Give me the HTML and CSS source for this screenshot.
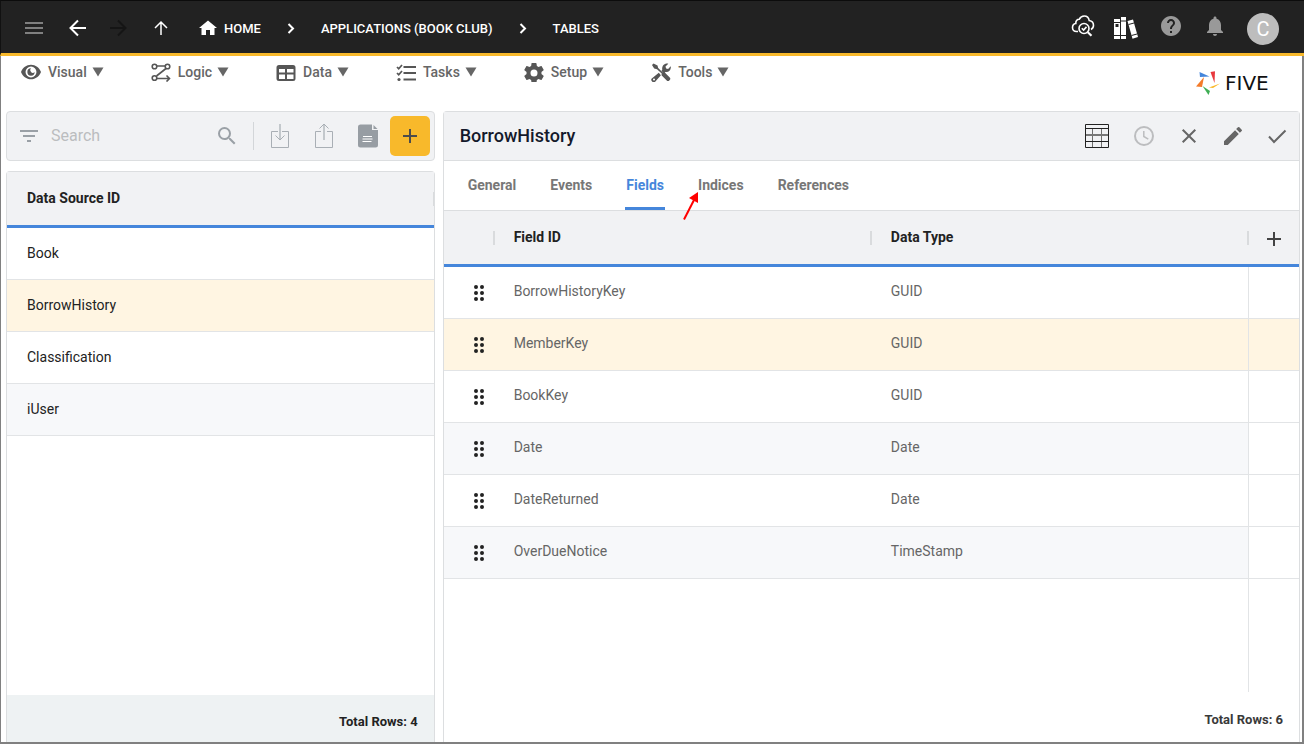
FILE: index.html
```html
<!DOCTYPE html>
<html lang="en">
<head>
<meta charset="utf-8">
<title>Five - Tables</title>
<link rel="stylesheet" href="styles.css">
</head>
<body>
<div class="app">
  <header class="topbar">
    <nav class="crumbs" aria-label="Navigation">
      <button class="nav-btn dim" aria-label="Menu"><svg width="24" height="24" viewBox="0 0 24 24"><path d="M3 5h18v2H3zM3 10h18v2H3zM3 15h18v2H3z"/></svg></button>
      <button class="nav-btn back" aria-label="Back"><svg width="24" height="24" viewBox="0 0 24 24"><path class="line" d="M20 11H5M12 3.500L4.500 11l7.500 7.500"/></svg></button>
      <button class="nav-btn off" aria-label="Forward" disabled><svg width="24" height="24" viewBox="0 0 24 24"><path class="line" d="M4 11h15M12 3.500l7.500 7.500-7.500 7.500"/></svg></button>
      <button class="nav-btn up" aria-label="Up"><svg width="24" height="24" viewBox="0 0 24 24"><path class="line thin" d="M12 18V5M6 11L12 5l6 6"/></svg></button>
      <a class="crumb" href="#"><svg width="24" height="24" viewBox="0 0 24 24"><path d="M10 18v-5h4v5h4.500v-7H21l-9-7.500L3 11h2.500v7z"/></svg>HOME</a>
      <svg class="chev" width="24" height="24" viewBox="0 0 24 24"><path class="line" d="M9.500 7l4.500 4.500L9.500 16"/></svg>
      <a class="crumb" href="#">APPLICATIONS (BOOK CLUB)</a>
      <svg class="chev" width="24" height="24" viewBox="0 0 24 24"><path class="line" d="M9.500 7l4.500 4.500L9.500 16"/></svg>
      <a class="crumb" href="#">TABLES</a>
    </nav>
    <div class="tools">
      <button class="tool" aria-label="Inspect"><svg width="24" height="24" viewBox="0 0 24 24" fill="none" stroke="#fff" stroke-width="1.600"><path d="M7 16.500H5.500C3 16.500 1.500 15 1.500 12.500c0-2.200 1.500-3.700 3.300-4C4.600 6 6 4.300 8.200 4.300 9.200 2.400 11 1 13.200 1c2.700 0 4.600 1.800 5 4.500 2.600.5 4.300 2.400 4.300 4.800 0 2-1 3.400-2.500 4.200"/><circle cx="13" cy="13.500" r="5"/><path d="M10.800 13.300l1.800 1.800 2.900-3.200"/><path stroke-width="2.200" d="M16.800 17.300l3.700 3.500"/></svg></button>
      <button class="tool" aria-label="Library"><svg width="26" height="26" viewBox="0 0 26 26"><path fill="#fff" d="M1 5h6v20H1zM8 3h5v22H8zM14.500 7l5.500-1.500L25 23l-5.500 1.700z"/><path fill="none" stroke="#222" d="M1 8.500h6M1 21.500h6M8 7h5M8 21.500h5M15.500 10.500l5.500-1.500M18.500 21.500l5.500-1.500"/><path fill="#222" d="M2.500 10h3v3h-3z"/></svg></button>
      <button class="tool grey" aria-label="Help"><svg width="24" height="24" viewBox="0 0 24 24"><path d="M12 1C6.480 1 2 5.480 2 11s4.480 10 10 10 10-4.480 10-10S17.520 1 12 1zm1 17h-2v-2h2v2zm2.070-7.750l-.9.920C13.450 11.900 13 12.500 13 14h-2v-.5c0-1.100.45-2.100 1.170-2.830l1.240-1.260c.37-.36.59-.86.59-1.410 0-1.100-.9-2-2-2s-2 .9-2 2H8c0-2.210 1.790-4 4-4s4 1.790 4 4c0 .88-.36 1.680-.93 2.250z"/></svg></button>
      <button class="tool grey" aria-label="Notifications"><svg width="24" height="24" viewBox="0 0 24 24"><path d="M12 21c1.100 0 2-.9 2-2h-4c0 1.100.89 2 2 2zm6-6v-5c0-3.070-1.640-5.640-4.500-6.320V3c0-.83-.67-1.500-1.500-1.500s-1.500.67-1.500 1.500v.68C7.630 4.360 6 6.920 6 10v5l-2 2v1h16v-1l-2-2z"/></svg></button>
      <button class="avatar" aria-label="Account">C</button>
    </div>
  </header>

  <div class="menubar">
    <nav class="menus" aria-label="Main menu">
      <button class="menu"><svg width="20" height="20" viewBox="1 1 22 22"><path d="M12 4C7 4 2.730 7.300 1 12c1.730 4.700 6 8 11 8s9.270-3.300 11-8c-1.730-4.700-6-8-11-8zm0 14a6 6 0 1 1 0-12 6 6 0 0 1 0 12zm0-10a4 4 0 1 0 4 4 2.500 2.500 0 0 1-4-4z"/></svg>Visual<svg class="tri" width="12" height="10" viewBox="0 0 12 10"><path d="M.5.500h11L6 9.500z"/></svg></button>
      <button class="menu"><svg width="20" height="20" viewBox="0 0 20 20" fill="none" stroke="#565656" stroke-width="1.600"><circle cx="3.500" cy="4.500" r="2.300"/><circle cx="16.500" cy="4.500" r="2.300"/><circle cx="3.500" cy="16" r="2.300"/><path d="M6 4h8M15 6.500L5.500 14M6 16.500h12M15.500 13.500l3 3-3 3"/></svg>Logic<svg class="tri" width="12" height="10" viewBox="0 0 12 10"><path d="M.5.500h11L6 9.500z"/></svg></button>
      <button class="menu"><svg width="20" height="20" viewBox="0 0 20 20"><path fill-rule="evenodd" d="M3 3h14a2.500 2.500 0 0 1 2.500 2.500v11A2.500 2.500 0 0 1 17 19H3a2.500 2.500 0 0 1-2.500-2.500v-11A2.500 2.500 0 0 1 3 3zm0 4v3.500h6V7zm8 0v3.500h6.500V7zm-8 5.500V17h6v-4.500zm8 0V17h6.500v-4.500z"/></svg>Data<svg class="tri" width="12" height="10" viewBox="0 0 12 10"><path d="M.5.500h11L6 9.500z"/></svg></button>
      <button class="menu"><svg width="20" height="20" viewBox="0 0 20 20"><path d="M7.500 4H20v2H7.500zM7.500 10H20v2H7.500zM7.500 16.500H20v2H7.500z"/><circle cx="3" cy="17.500" r="1.600"/><path fill="none" stroke="#565656" stroke-width="1.700" d="M1 5l1.700 1.700L6 3M1 11l1.700 1.700L6 9"/></svg>Tasks<svg class="tri" width="12" height="10" viewBox="0 0 12 10"><path d="M.5.500h11L6 9.500z"/></svg></button>
      <button class="menu"><svg width="20" height="20" viewBox="2 1 20 20"><path d="M12 15.500A3.500 3.500 0 0 1 8.500 12 3.500 3.500 0 0 1 12 8.500a3.500 3.500 0 0 1 3.500 3.500 3.500 3.500 0 0 1-3.500 3.500m7.430-2.530c.04-.32.07-.64.07-.97 0-.33-.03-.66-.07-1l2.110-1.630c.19-.15.24-.42.12-.64l-2-3.460c-.12-.22-.39-.31-.61-.22l-2.490 1c-.52-.39-1.060-.73-1.690-.98l-.37-2.650A.506.506 0 0 0 14 2h-4c-.25 0-.46.18-.5.420l-.37 2.650c-.63.25-1.170.59-1.690.98l-2.490-1c-.22-.09-.49 0-.61.220l-2 3.460c-.13.22-.07.49.12.640L4.570 11c-.04.34-.07.67-.07 1 0 .33.03.65.070.970l-2.110 1.660c-.19.15-.25.42-.12.640l2 3.460c.12.22.39.3.61.220l2.490-1.010c.52.4 1.060.74 1.690.990l.37 2.650c.04.24.25.42.5.420h4c.25 0 .46-.18.5-.42l.37-2.650c.63-.26 1.170-.59 1.690-.99l2.490 1.010c.22.08.49 0 .61-.22l2-3.460c.12-.22.07-.49-.12-.64z"/></svg>Setup<svg class="tri" width="12" height="10" viewBox="0 0 12 10"><path d="M.5.500h11L6 9.500z"/></svg></button>
      <button class="menu"><svg width="20" height="20" viewBox="0 0 20 20"><path d="M1 3L2.500 1.500l4 2 .7 2.500 4.300 4.300 1.800-.3 5.200 5.200a2 2 0 0 1 0 3 2 2 0 0 1-3 0l-5-5 .2-1.800L6 7.300 3.200 6.500z"/><path d="M14.500 1.700c1-.3 2-.3 2.800 0L14.500 4.500l.6 2 2 .5 2.600-2.700c.8 3.500-2 6.400-5.300 5.700l-1.300 1.300-2.800-2.300 1-1.200c-.6-2.700.6-5.300 3.200-6.100zM7.800 10.800L1.400 16a2.300 2.300 0 1 0 3.200 3.200l5.300-6z"/><circle cx="3" cy="17.500" r="1" fill="#fff"/></svg>Tools<svg class="tri" width="12" height="10" viewBox="0 0 12 10"><path d="M.5.500h11L6 9.500z"/></svg></button>
    </nav>
    <div class="brand"><svg width="24" height="24" viewBox="0 0 24 24"><path fill="#4586db" d="M3.500 1l10 4.500L4 6z"/><path fill="#e8383d" d="M14.500 1L19 .3 18.500 12z"/><path fill="#fbb929" d="M24 12.500L17 17l-4-.5z"/><path fill="#3fae54" d="M6.500 15L14 20l-1.500 4z"/><path fill="#f47b2a" d="M8 6L6 16l-6-.5z"/></svg><span class="word">FIVE</span></div>
  </div>

  <main class="work">
    <section class="side">
      <div class="searchbar">
        <svg width="24" height="24" viewBox="0 0 24 24"><path d="M3 6h18v2H3zM6 11h12v2H6zM10 16h4v2h-4z"/></svg>
        <input class="search" type="text" placeholder="Search" aria-label="Search">
        <button class="find" aria-label="Find"><svg width="24" height="24" viewBox="0 0 24 24"><path d="M15.500 14h-.79l-.28-.27A6.471 6.471 0 0 0 16 9.500 6.500 6.500 0 1 0 9.500 16c1.610 0 3.090-.59 4.230-1.570l.27.280v.79l5 4.990L20.490 19l-4.990-5zm-6 0C7.010 14 5 11.990 5 9.500S7.010 5 9.500 5 14 7.010 14 9.500 11.990 14 9.500 14z"/></svg></button>
        <div class="bar-actions">
          <button class="act" aria-label="Import"><svg width="20" height="26" viewBox="0 0 20 26" fill="none" stroke="#a9afb5"><path d="M8 8.500H1.500v16h17v-16H12M5.500 12.500l4.500 4.500 4.500-4.500"/><path stroke="#c3c8cc" stroke-width="2" d="M10 1v15"/></svg></button>
          <button class="act" aria-label="Export"><svg width="20" height="26" viewBox="0 0 20 26" fill="none" stroke="#a9afb5"><path d="M7 8.500H1.500v16h17v-16H13M5.500 5.500L10 1l4.500 4.500"/><path stroke="#c3c8cc" stroke-width="2" d="M10 2v15"/></svg></button>
          <button class="act" aria-label="Document"><svg width="20" height="24" viewBox="0 0 20 24"><path fill="#979da3" d="M3 .500h11V6h6v15a2.500 2.500 0 0 1-2.500 2.500h-15A2.500 2.500 0 0 1 0 21V3A2.500 2.500 0 0 1 3 .500zM15.500 1L19.500 5h-4z"/><path stroke="#fff" d="M5 12.500h9M4.500 15h10M4.500 17.500h9"/></svg></button>
          <button class="add" aria-label="Add"><svg width="14" height="14" viewBox="0 0 14 14"><path d="M6 0h2v6h6v2H8v6H6V8H0V6h6z"/></svg></button>
        </div>
      </div>
      <div class="list">
        <table class="grid">
          <thead><tr><th>Data Source ID</th></tr></thead>
          <tbody>
            <tr><td>Book</td></tr>
            <tr class="sel"><td>BorrowHistory</td></tr>
            <tr><td>Classification</td></tr>
            <tr class="alt"><td>iUser</td></tr>
          </tbody>
        </table>
        <div class="total tinted">Total Rows: 4</div>
      </div>
    </section>

    <section class="detail">
      <div class="detail-head">
        <h1 class="title">BorrowHistory</h1>
        <button class="act wide" aria-label="Data view"><svg width="24" height="24" viewBox="0 0 24 24" fill="none"><path stroke="#6e6e6e" d="M7.500 4v19M16.500 4v19"/><path stroke="#222" d="M.5.500h23v23H.5zM0 4.500h24M0 17.500h24"/><path stroke="#777" stroke-width="2" d="M1 11h22"/></svg></button>
        <button class="act wide" aria-label="History"><svg width="20" height="20" viewBox="0 0 20 20" fill="none" stroke="#bcbdbf" stroke-width="2"><circle cx="10" cy="10" r="9"/><path stroke-width="1.500" d="M9.800 5v5.500l4.500 2.600"/></svg></button>
        <button class="act" aria-label="Close"><svg width="24" height="24" viewBox="0 0 24 24"><path fill="none" stroke="#666" stroke-width="2" d="M5.700 5.700l12.600 12.600M18.300 5.700L5.700 18.300"/></svg></button>
        <button class="act" aria-label="Edit"><svg width="24" height="24" viewBox="0 0 24 24"><path fill="#666" d="M3 17.250V21h3.750L17.810 9.940l-3.750-3.750L3 17.250zM20.710 7.040a.996.996 0 0 0 0-1.410l-2.340-2.340a.996.996 0 0 0-1.410 0l-1.830 1.830 3.750 3.750 1.830-1.830z"/></svg></button>
        <button class="act" aria-label="Save"><svg width="24" height="24" viewBox="0 0 24 24"><path fill="none" stroke="#666" stroke-width="2" d="M4 12.500L9 18 20.500 6.500"/></svg></button>
      </div>
      <nav class="tabs">
        <button class="tab">General</button>
        <button class="tab">Events</button>
        <button class="tab on">Fields</button>
        <button class="tab">Indices<svg class="pointer" width="18" height="32" viewBox="0 0 18 32"><path d="M2 29.500L12 10" stroke="#f00" stroke-width="2"/><path fill="#f00" d="M16 2v11L7 8z"/></svg></button>
        <button class="tab">References</button>
      </nav>
      <table class="grid fields">
        <colgroup><col class="c-grip"><col><col><col class="c-add"></colgroup>
        <thead><tr><th aria-label="Order"></th><th>Field ID</th><th>Data Type</th><th class="plus"><button class="row-add" aria-label="Add field"><svg width="14" height="14" viewBox="0 0 14 14"><path d="M6 0h2v6h6v2H8v6H6V8H0V6h6z"/></svg></button></th></tr></thead>
        <tbody>
          <tr><td><svg class="grip" width="12" height="18" viewBox="0 0 12 18"><path d="M3 3h0M9 3h0M3 9h0M9 9h0M3 15h0M9 15h0"/></svg></td><td>BorrowHistoryKey</td><td>GUID</td><td></td></tr>
          <tr class="sel"><td><svg class="grip" width="12" height="18" viewBox="0 0 12 18"><path d="M3 3h0M9 3h0M3 9h0M9 9h0M3 15h0M9 15h0"/></svg></td><td>MemberKey</td><td>GUID</td><td></td></tr>
          <tr><td><svg class="grip" width="12" height="18" viewBox="0 0 12 18"><path d="M3 3h0M9 3h0M3 9h0M9 9h0M3 15h0M9 15h0"/></svg></td><td>BookKey</td><td>GUID</td><td></td></tr>
          <tr class="alt"><td><svg class="grip" width="12" height="18" viewBox="0 0 12 18"><path d="M3 3h0M9 3h0M3 9h0M9 9h0M3 15h0M9 15h0"/></svg></td><td>Date</td><td>Date</td><td></td></tr>
          <tr><td><svg class="grip" width="12" height="18" viewBox="0 0 12 18"><path d="M3 3h0M9 3h0M3 9h0M9 9h0M3 15h0M9 15h0"/></svg></td><td>DateReturned</td><td>Date</td><td></td></tr>
          <tr class="alt"><td><svg class="grip" width="12" height="18" viewBox="0 0 12 18"><path d="M3 3h0M9 3h0M3 9h0M9 9h0M3 15h0M9 15h0"/></svg></td><td>OverDueNotice</td><td>TimeStamp</td><td></td></tr>
        </tbody>
      </table>
      <div class="rest"></div>
      <div class="total">Total Rows: 6</div>
    </section>
  </main>
</div>
</body>
</html>
```
FILE: styles.css
```css
* { box-sizing: border-box; }
body {
  margin: 0;
  font: 14px/20px Roboto, "Liberation Sans", sans-serif;
  color: #222;
  background: #fff;
}
button { border: 0; padding: 0; background: none; font: inherit; color: inherit; }
svg { display: block; flex: none; }

.app {
  min-height: 100vh;
  display: flex;
  flex-direction: column;
  border: solid #808080;
  border-width: 0 2px 2px 1px;
}

.topbar {
  display: flex;
  justify-content: space-between;
  align-items: center;
  height: 56px;
  padding: 3px 25px 0 21px;
  margin: 0 -2px 0 -1px;
  border-top: 1px solid #0c0c0c;
  border-bottom: 3px solid #f8b92b;
  border-left: 1px solid #111;
  background: #222;
  color: #fff;
  fill: #fff;
}
.crumbs { display: flex; align-items: center; }
.nav-btn { width: 24px; height: 24px; }
.line { fill: none; stroke: #fff; stroke-width: 2; }
.thin { stroke-width: 1.500; }
.dim { fill: #808080; }
.back { margin-left: 20px; }
.off { margin-left: 16px; }
.off .line { stroke: #151515; }
.up { margin: 0 23px 0 19px; }
.crumb {
  display: flex;
  align-items: center;
  gap: 4px;
  font-size: 13px;
  font-weight: 500;
  color: #fff;
  text-decoration: none;
}
.chev { margin: 0 18px; }

.tools { display: flex; align-items: center; gap: 20px; }
.tool { padding-bottom: 4px; }
.tools .tool:first-child { margin-right: -2px; }
.grey { fill: #999; }
.avatar {
  width: 32px;
  height: 32px;
  border-radius: 50%;
  background: #bdbdbd;
  color: #fff;
  font-size: 20px;
  line-height: 32px;
}

.menubar {
  display: flex;
  justify-content: space-between;
  align-items: flex-start;
  height: 55px;
  padding: 6px 19px 0 20px;
}
.menus { display: flex; gap: 47px; }
.menu {
  display: flex;
  align-items: center;
  gap: 7px;
  font-weight: 500;
  color: #666;
  fill: #565656;
}
.tri { margin-left: -2px; fill: #666; }
.brand { display: flex; align-items: center; gap: 5px; padding-top: 9px; }
.word { width: 58px; font: 20px/24px "DejaVu Sans", sans-serif; color: #111; }

.work {
  flex: 1;
  display: grid;
  grid-template-columns: minmax(0, 1fr) minmax(0, 2fr);
  gap: 8px;
  padding: 0 2px 0 5px;
}
.side { display: flex; flex-direction: column; gap: 10px; }
.searchbar {
  display: flex;
  align-items: center;
  height: 50px;
  padding: 0 4px 0 10px;
  border: 1px solid #dcdee0;
  border-radius: 4px;
  background: #f1f2f4;
  fill: #9aa0a6;
}
.search {
  flex: 1;
  min-width: 0;
  margin-left: 8px;
  padding: 0 2px;
  border: 0;
  background: none;
  font: 16px/24px Roboto, sans-serif;
  outline: 0;
}
.search::placeholder { color: #bbbdbf; opacity: 1; }
.bar-actions {
  display: flex;
  align-items: center;
  margin-left: 14px;
  padding-left: 5px;
  background: linear-gradient(#d3d6d9, #d3d6d9) no-repeat left center / 1px 28px;
}
.act { width: 44px; height: 40px; display: grid; place-items: center; }
.wide { width: 47px; }
.add {
  width: 40px;
  height: 40px;
  display: grid;
  place-items: center;
  border-radius: 5px;
  background: #f8b92b;
  fill: #4c4c4c;
}

.list {
  flex: 1;
  display: flex;
  flex-direction: column;
  border: 1px solid #dcdee0;
  border-bottom: 0;
  border-radius: 4px 4px 0 0;
}
.grid { width: 100%; table-layout: fixed; border-collapse: separate; border-spacing: 0; }
.grid th {
  position: relative;
  height: 56px;
  padding: 0 20px 2px;
  border-bottom: 3px solid #4586db;
  background: #f1f2f4;
  font-weight: 700;
  text-align: left;
}
.grid th::after {
  content: "";
  position: absolute;
  right: 0;
  top: 20px;
  width: 1px;
  height: 14px;
  background: #d9dbdd;
}
.grid td { height: 52px; padding: 0 20px 2px; border-bottom: 1px solid #e2e4e6; }
.grid .sel td { background: #fff5e2; }
.grid .alt td { background: #f7f8fa; }
.total {
  height: 47px;
  margin-top: auto;
  padding: 17px 16px 0;
  font-size: 13px;
  font-weight: 700;
  text-align: right;
}
.tinted { background: #eef2f3; }

.detail {
  display: flex;
  flex-direction: column;
  border: 1px solid #dcdee0;
  border-bottom: 0;
  border-radius: 4px 4px 0 0;
}
.detail-head {
  display: flex;
  align-items: center;
  height: 49px;
  padding-left: 16px;
  border-bottom: 1px solid #dcdee0;
  background: #f1f2f4;
}
.title { flex: 1; margin: 0; font-size: 18px; line-height: 24px; font-weight: 500; color: #14192b; }
.tabs {
  display: flex;
  gap: 32px;
  height: 50px;
  padding: 0 23px;
  border-bottom: 1px solid #dcdee0;
}
.tab { position: relative; border-bottom: 3px solid transparent; padding: 1px 1px 0; font-weight: 700; color: #777; }
.on { color: #4586db; border-color: #4586db; border-radius: 2px 2px 0 0; }
.pointer { position: absolute; z-index: 1; left: -15px; top: 29px; }

.fields th::after { right: -1px; width: 2px; z-index: 1; }
.fields .c-grip { width: 50px; }
.fields .c-add { width: 51px; }
.fields .plus { padding: 0; }
.fields .plus::after { display: none; }
.row-add { display: grid; place-items: center; width: 51px; height: 40px; margin-top: 3px; fill: #444; }
.fields td { padding-bottom: 4px; color: #666; }
.fields td:first-child { padding: 0 0 0 29px; }
.fields td:last-child { border-left: 1px solid #e2e4e6; }
.fields .alt td:last-child { background: #fff; }
.grip { fill: none; stroke: #222; stroke-width: 4; stroke-linecap: round; }
.rest { flex: 1; width: 51px; margin-left: auto; border-left: 1px solid #e2e4e6; }
.detail .total { height: 50px; margin-top: 0; padding-top: 18px; color: #3a3a3a; }
```
